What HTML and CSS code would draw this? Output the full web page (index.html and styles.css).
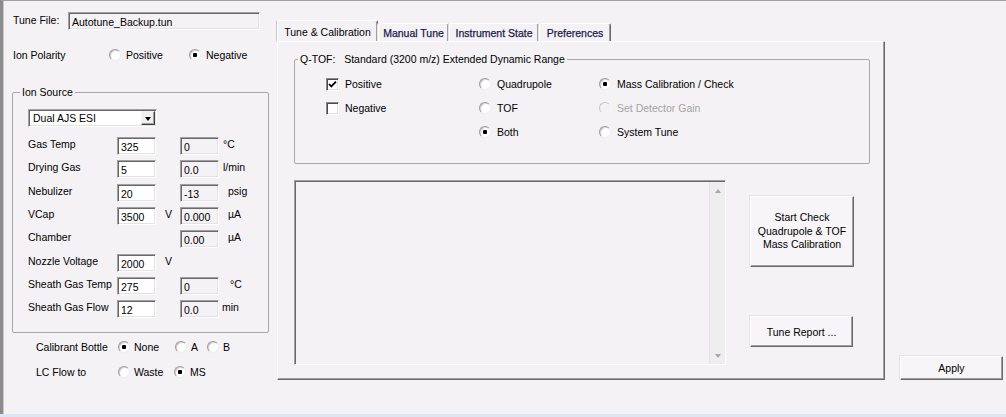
FILE: index.html
```html
<!DOCTYPE html>
<html>
<head>
<meta charset="utf-8">
<link rel="stylesheet" href="styles.css">
</head>
<body>
<div class="window">
  <div class="frame">
    <div class="left">
      <div class="tune-row">
        <span class="tune-label">Tune File:</span>
        <div class="field ro tune-file">Autotune_Backup.tun</div>
      </div>
      <div class="polarity-row">
        <span class="pol-label">Ion Polarity</span>
        <span class="opt g5 w80"><span class="radio"></span>Positive</span>
        <span class="opt g5"><span class="radio on"></span>Negative</span>
      </div>
      <fieldset class="group ion">
        <legend>Ion Source</legend>
        <div class="ion-body">
          <div class="combo">
            <span class="combo-text">Dual AJS ESI</span>
            <span class="drop"><span class="tri"></span></span>
          </div>
          <div class="params">
            <span class="pl">Gas Temp</span><div class="field in">325</div><span></span><div class="field ro">0</div><span class="unit u4">°C</span>
            <span class="pl">Drying Gas</span><div class="field in">5</div><span></span><div class="field ro">0.0</div><span class="unit u4">l/min</span>
            <span class="pl">Nebulizer</span><div class="field in">20</div><span></span><div class="field ro">-13</div><span class="unit u9">psig</span>
            <span class="pl">VCap</span><div class="field in">3500</div><span class="vunit">V</span><div class="field ro">0.000</div><span class="unit u9">µA</span>
            <span class="pl">Chamber</span><span></span><span></span><div class="field ro">0.00</div><span class="unit u9">µA</span>
            <span class="pl">Nozzle Voltage</span><div class="field in">2000</div><span class="vunit">V</span><span></span><span></span>
            <span class="pl">Sheath Gas Temp</span><div class="field in">275</div><span></span><div class="field ro">0</div><span class="unit u11">°C</span>
            <span class="pl">Sheath Gas Flow</span><div class="field in">12</div><span></span><div class="field ro">0.0</div><span class="unit u3">min</span>
          </div>
        </div>
      </fieldset>
      <div class="bottom-row first">
        <span class="bl">Calibrant Bottle</span>
        <span class="opt w57"><span class="radio on"></span>None</span>
        <span class="opt w32"><span class="radio"></span>A</span>
        <span class="opt"><span class="radio"></span>B</span>
      </div>
      <div class="bottom-row second">
        <span class="bl">LC Flow to</span>
        <span class="opt w56"><span class="radio"></span>Waste</span>
        <span class="opt"><span class="radio on"></span>MS</span>
      </div>
    </div>

    <div class="tabctl">
      <div class="tabstrip">
        <div class="tab sel">Tune &amp; Calibration</div>
        <div class="tab w71">Manual Tune</div>
        <div class="tab w90">Instrument State</div>
        <div class="tab w72">Preferences</div>
      </div>
      <div class="panel">
        <fieldset class="group qtof">
          <legend>Q-TOF:   Standard (3200 m/z) Extended Dynamic Range</legend>
          <div class="qbody">
            <span class="opt t"><span class="check on"><svg width="9" height="9" viewBox="0 0 9 9"><path d="M1 4 L3.3 6.4 L8 1.6" fill="none" stroke="#000" stroke-width="1.8"/></svg></span>Positive</span>
            <span class="opt t"><span class="radio"></span>Quadrupole</span>
            <span class="opt t"><span class="radio on"></span>Mass Calibration / Check</span>
            <span class="opt t"><span class="check"></span>Negative</span>
            <span class="opt t"><span class="radio"></span>TOF</span>
            <span class="opt t disabled"><span class="radio"></span>Set Detector Gain</span>
            <span></span>
            <span class="opt t"><span class="radio on"></span>Both</span>
            <span class="opt t"><span class="radio"></span>System Tune</span>
          </div>
        </fieldset>
        <div class="lower">
          <div class="log">
            <div class="log-area"></div>
            <div class="vscroll">
              <span class="sb-btn"><span class="arr up"></span></span>
              <span class="sb-btn"><span class="arr down"></span></span>
            </div>
          </div>
          <div class="btns">
            <div class="btn start">Start Check<br>Quadrupole &amp; TOF<br>Mass Calibration</div>
            <div class="btn report">Tune Report ...</div>
          </div>
        </div>
      </div>
    </div>

    <div class="aside">
      <div class="btn apply">Apply</div>
    </div>
  </div>
  <div class="strip"></div>
</div>
</body>
</html>
```

FILE: styles.css
```css
* { box-sizing: border-box; }
html, body { margin: 0; padding: 0; }
body {
  width: 1006px;
  height: 417px;
  overflow: hidden;
  background: #f5f2f5;
  font-family: "Liberation Sans", Arial, sans-serif;
  font-size: 10.5px;
  line-height: 14px;
  color: #000;
}
.window { display: flex; flex-direction: column; height: 417px; }
.frame {
  flex: 1;
  display: flex;
  border-top: 1px solid #a0a0a0;
  border-left: 3px solid #8c8c8c;
  box-shadow: inset 1px 0 0 #c8c8c8;
}
.strip { height: 3px; background: #dce6f4; flex: none; }

/* ---------- left column ---------- */
.left { width: 274px; flex: none; }
.tune-row { display: flex; align-items: flex-start; margin: 11px 0 0 10px; }
.tune-label { width: 55px; margin-top: 1px; }
.field {
  height: 18px;
  border: 1px solid;
  border-color: #a0a0a0 #ffffff #ffffff #a0a0a0;
  box-shadow: inset 1px 1px 0 #696969, inset -1px -1px 0 #e3e3e3;
  padding: 2px 3px 0;
  line-height: 14px;
  white-space: nowrap;
  overflow: hidden;
}
.field.in { background: #ffffff; }
.field.ro { background: #f5f2f5; }
.tune-file { width: 192px; }

.polarity-row { display: flex; align-items: center; height: 14px; margin: 18px 0 0 10px; }
.pol-label { width: 96px; }

.opt { display: inline-flex; align-items: center; gap: 4px; white-space: nowrap; height: 14px; }
.opt.g5 { gap: 5px; }
.opt.t { gap: 6px; }
.w80 { width: 80px; }
.w57 { width: 57px; }
.w56 { width: 56px; }
.w32 { width: 32px; }

.radio {
  position: relative;
  width: 12px;
  height: 12px;
  flex: none;
  border-radius: 50%;
  background: #ffffff;
  border: 1px solid;
  border-color: #9a9a9a #eeeeee #eeeeee #9a9a9a;
  box-shadow: inset 1px 1px 0 #d0d0d0;
}
.radio.on::after {
  content: "";
  position: absolute;
  left: 3px;
  top: 3px;
  width: 4px;
  height: 4px;
  border-radius: 1px;
  background: #000;
}
.check {
  width: 13px;
  height: 13px;
  flex: none;
  background: #ffffff;
  border: 1px solid;
  border-color: #8a8a8a #ffffff #ffffff #8a8a8a;
  box-shadow: inset 1px 1px 0 #4a4a4a, inset -1px -1px 0 #e0e0e0;
  display: flex;
  align-items: center;
  justify-content: center;
}
.disabled { color: #a4a4a4; }
.disabled .radio { background: #f5f2f5; border-color: #c4c4c4 #f5f5f5 #f5f5f5 #c4c4c4; box-shadow: none; }

.group {
  margin: 0;
  padding: 0;
  border: 1px solid #a8a7aa;
  border-radius: 2px;
  min-inline-size: 0;
}
.group legend { padding: 0 2px; line-height: 14px; white-space: pre; }
.ion { width: 257px; height: 248px; margin: 23px 0 0 9px; }
.ion legend { margin-left: 7px; }
.ion-body { padding: 10px 0 0 15px; }

.combo {
  width: 129px;
  height: 18px;
  display: flex;
  align-items: flex-start;
  padding: 1px;
  background: #ffffff;
  border: 1px solid;
  border-color: #a0a0a0 #ffffff #ffffff #a0a0a0;
  box-shadow: inset 1px 1px 0 #696969, inset -1px -1px 0 #e3e3e3;
}
.combo-text { flex: 1; padding-left: 3px; }
.drop {
  width: 14px;
  height: 14px;
  background: #f0f0f0;
  border: 1px solid;
  border-color: #f4f4f4 #404040 #404040 #f4f4f4;
  box-shadow: inset -1px -1px 0 #a0a0a0;
  display: flex;
  align-items: center;
  justify-content: center;
}
.tri {
  width: 0;
  height: 0;
  border-left: 3.5px solid transparent;
  border-right: 3.5px solid transparent;
  border-top: 4px solid #000;
  margin-top: 1px;
}

.params {
  display: grid;
  grid-template-columns: 89px 39px 24px 39px auto;
  grid-auto-rows: 18px;
  row-gap: 5.33px;
  margin-top: 10px;
}
.pl, .unit, .vunit { white-space: nowrap; line-height: 14px; }
.vunit { padding-left: 9px; }
.u3 { padding-left: 3px; }
.u4 { padding-left: 4px; }
.u9 { padding-left: 9px; }
.u11 { padding-left: 11px; }

.bottom-row { display: flex; align-items: center; height: 14px; padding-left: 33px; }
.bottom-row.first { margin-top: 7px; }
.bottom-row.second { margin-top: 11px; }
.bl { width: 82px; white-space: nowrap; }

/* ---------- tab control ---------- */
.tabctl { width: 608px; flex: none; margin-top: 19px; display: flex; flex-direction: column; }
.tabstrip { display: flex; align-items: flex-end; height: 21px; }
.tab {
  height: 18px;
  border: 1px solid;
  border-bottom: none;
  border-color: #ffffff #696969 transparent #ffffff;
  box-shadow: inset -1px 0 0 #a0a0a0, -1px 0 0 #e2e2e2;
  border-radius: 2px 2px 0 0;
  padding-top: 2px;
  text-align: center;
  white-space: nowrap;
  color: #1a1a48;
  -webkit-text-stroke: 0.25px #1a1a48;
}
.tab.sel {
  width: 101px;
  height: 21px;
  padding-top: 4px;
  color: #000;
  -webkit-text-stroke: 0;
  box-shadow: inset -1px 0 0 #a0a0a0, -1px 0 0 #c8c8c8;
}
.w71 { width: 71px; }
.w90 { width: 90px; }
.w72 { width: 72px; }

.panel {
  height: 339px;
  border: 1px solid;
  border-color: #ffffff #696969 #696969 #ffffff;
  box-shadow: inset -1px -1px 0 #a0a0a0;
  padding: 10px 0 0 16px;
}
.qtof { width: 576px; height: 112px; }
.qtof legend { margin-left: 3px; }
.qbody {
  display: grid;
  grid-template-columns: 153px 120px auto;
  grid-auto-rows: 14px;
  row-gap: 10px;
  padding: 11px 0 0 31px;
}

.lower { display: flex; margin-top: 16px; }
.log {
  width: 432px;
  height: 185px;
  display: flex;
  border: 1px solid;
  border-color: #a0a0a0 #ffffff #ffffff #a0a0a0;
  box-shadow: inset 1px 1px 0 #696969;
  padding: 1px 0 0 1px;
}
.log-area { flex: 1; }
.vscroll {
  width: 16px;
  background: #efeeef;
  border-left: 1px solid #e6e4e6;
  display: flex;
  flex-direction: column;
  justify-content: space-between;
}
.sb-btn { height: 17px; display: flex; align-items: center; justify-content: center; }
.arr { width: 0; height: 0; border-left: 3.5px solid transparent; border-right: 3.5px solid transparent; }
.arr.up { border-bottom: 4px solid #a8a8a8; }
.arr.down { border-top: 4px solid #a8a8a8; }

.btns { margin-left: 24px; display: flex; flex-direction: column; }
.btn {
  display: flex;
  align-items: center;
  justify-content: center;
  text-align: center;
  background: #f7f5f7;
  border: 1px solid;
  border-color: #ffffff #696969 #696969 #ffffff;
  box-shadow: inset -1px -1px 0 #a0a0a0, -1px -1px 0 #e4e4e4;
  white-space: nowrap;
}
.btn.start { width: 104px; height: 71px; margin-top: 16px; line-height: 13.5px; }
.btn.report { width: 103px; height: 31px; margin-top: 49px; }

.aside { margin-left: 15px; margin-top: 355px; }
.btn.apply { width: 103px; height: 24px; }
```
